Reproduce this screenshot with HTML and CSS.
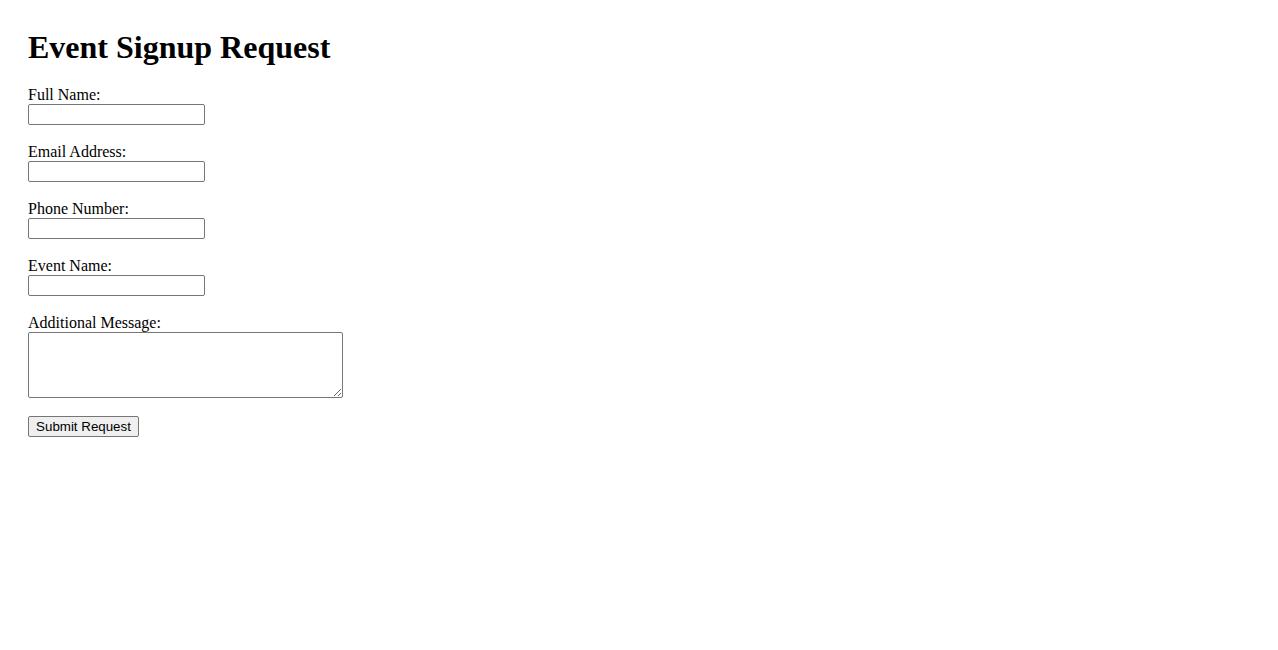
FILE: index.html
```html
<!DOCTYPE html>
<html>
<head>
<meta charset="utf-8">
<title>Event Signup Request</title>
<link rel="stylesheet" href="styles.css">
</head>
<body>
<div class="page">
  <h1 class="title">Event Signup Request</h1>
  <form class="form">
    <label class="label" for="name">Full Name:</label><br>
    <input class="field" type="text" id="name"><br><br>
    <label class="label" for="email">Email Address:</label><br>
    <input class="field" type="email" id="email"><br><br>
    <label class="label" for="phone">Phone Number:</label><br>
    <input class="field" type="tel" id="phone"><br><br>
    <label class="label" for="event">Event Name:</label><br>
    <input class="field" type="text" id="event"><br><br>
    <label class="label" for="msg">Additional Message:</label><br>
    <textarea class="area" id="msg"></textarea><br><br>
    <button class="btn" type="button">Submit Request</button>
  </form>
</div>
</body>
</html>
```
FILE: styles.css
```css
body {
  margin: 8px;
  font-family: "Liberation Serif", "Times New Roman", serif;
  font-size: 16px;
  color: #000;
  background: #fff;
}
.page {
  padding: 20px;
}
.title {
  font-size: 32px;
  font-weight: bold;
  padding-top: 1px;
  margin: 0 0 20.44px;
}
.form {
  margin: 0;
}
.field {
  width: 177px;
  height: 21px;
  box-sizing: border-box;
  border: 1px solid #767676;
  border-radius: 2px;
  padding: 1px 2px;
  font-family: "Liberation Sans", Arial, sans-serif;
  font-size: 13.33px;
  margin: 0;
}
.area {
  width: 315px;
  height: 66px;
  box-sizing: border-box;
  border: 1px solid #767676;
  border-radius: 2px;
  padding: 2px;
  font-family: "Liberation Mono", monospace;
  font-size: 13.33px;
  margin: 0;
  vertical-align: bottom;
}
.btn {
  width: 111px;
  height: 21px;
  box-sizing: border-box;
  font-family: "Liberation Sans", Arial, sans-serif;
  font-size: 13.33px;
  color: #000;
  background: #efefef;
  border: 1px solid #767676;
  border-radius: 2px;
  padding: 1px 6px;
  margin: 0;
}
```
